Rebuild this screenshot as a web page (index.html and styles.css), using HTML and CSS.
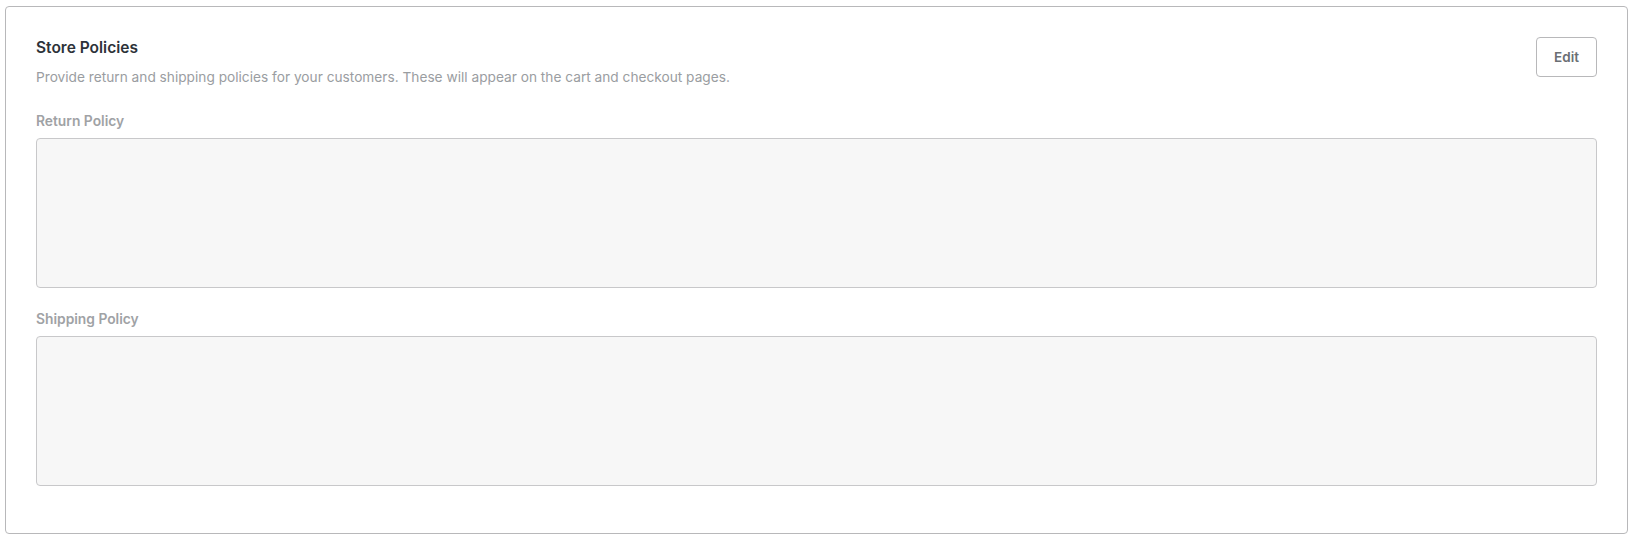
FILE: index.html
```html
<html>
	<head>
		<title>Store Policies</title>
<link rel="stylesheet" href="styles.css">
	</head>
	<body>
		<div class="card">
			<div class="card_head">
				<div>
					<p class="title">Store Policies</p>
					<p class="desc">Provide return and shipping policies for your customers. These will appear on the cart and checkout pages.</p>
				</div>
				<button class="edit_btn">Edit</button>
			</div>
			<label class="field_label">Return Policy</label>
			<textarea class="policy" disabled></textarea>
			<label class="field_label next">Shipping Policy</label>
			<textarea class="policy" disabled></textarea>
		</div>
	</body>
</html>
```

FILE: styles.css
```css
body	{
	margin: 6px 13px 0 5px;
	background: white;
	font-family: "Inter", "Liberation Sans", sans-serif;
}
.card	{
	border: solid rgb(184, 184, 186) 1px;
	border-radius: 4px;
	padding: 30px 30px 47px 30px;
}
.card_head	{
	display: flex;
	justify-content: space-between;
	align-items: flex-start;
}
.title	{
	margin: 0;
	font-size: 15.5px;
	line-height: 21px;
	font-weight: 600;
	color: rgb(45, 50, 57);
}
.desc	{
	margin: 10px 0 0 0;
	font-size: 13.7px;
	line-height: 18px;
	color: rgb(154, 157, 161);
}
.edit_btn	{
	width: 61px;
	height: 40px;
	border: solid rgb(184, 184, 186) 1px;
	border-radius: 4px;
	background: white;
	font-family: "Inter", "Liberation Sans", sans-serif;
	font-size: 13.5px;
	font-weight: 600;
	color: rgb(107, 111, 116);
	padding: 0;
}
.field_label	{
	display: block;
	margin: 27px 0 9px 0;
	font-size: 13.8px;
	line-height: 16px;
	font-weight: 600;
	color: rgb(159, 162, 165);
}
.field_label.next	{
	margin-top: 23px;
}
.policy	{
	display: block;
	box-sizing: border-box;
	width: 100%;
	height: 150px;
	margin: 0;
	border: solid rgb(200, 200, 202) 1px;
	border-radius: 4px;
	background: rgb(247, 247, 247);
	resize: none;
}
```
